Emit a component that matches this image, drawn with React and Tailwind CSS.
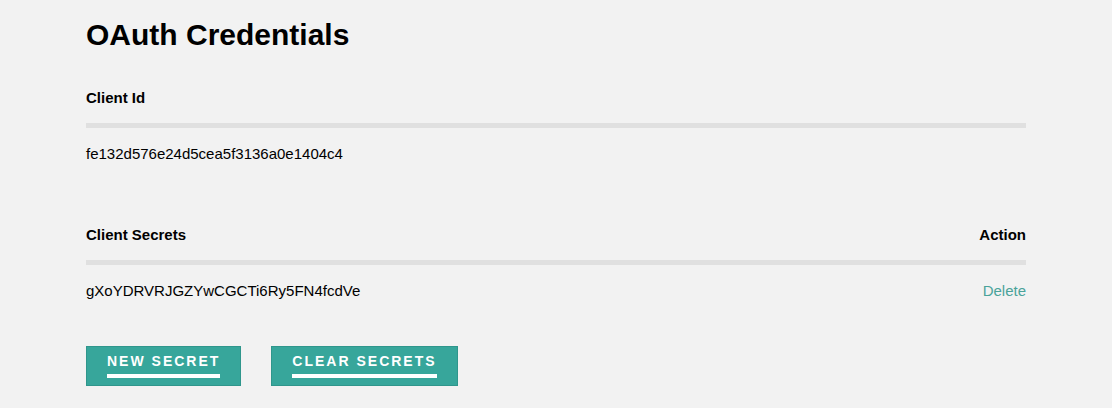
export default function App() {
  return (
    <div className="min-h-[408px] bg-[#f2f2f2] font-['Liberation_Sans',Arial,sans-serif] text-black">
      <div className="mx-[86px] pt-[17px]">
        <h1 className="text-[30px] leading-[36px] font-bold">OAuth Credentials</h1>

        <section className="mt-[35px]">
          <h2 className="text-[15px] leading-[20px] font-bold">Client Id</h2>
          <div className="mt-[15px] h-[5px] bg-[#e0e0e0]" />
          <p className="mt-[16px] text-[15px] leading-[20px]">fe132d576e24d5cea5f3136a0e1404c4</p>
        </section>

        <section className="mt-[61px]">
          <div className="flex items-center justify-between text-[15px] leading-[20px] font-bold">
            <span>Client Secrets</span>
            <span>Action</span>
          </div>
          <div className="mt-[15px] h-[5px] bg-[#e0e0e0]" />
          <div className="mt-[16px] flex items-center justify-between text-[15px] leading-[20px]">
            <span>gXoYDRVRJGZYwCGCTi6Ry5FN4fcdVe</span>
            <a className="text-[#4aa39a] cursor-pointer">Delete</a>
          </div>
        </section>

        <div className="mt-[45px] flex gap-[30px]">
          <button className="inline-flex border border-[#2f968c] bg-[#37a69b] px-5 py-[7px] text-white">
            <span className="border-b-4 border-white pb-[6px] text-[14px] leading-none font-bold tracking-[2px] uppercase">New Secret</span>
          </button>
          <button className="inline-flex border border-[#2f968c] bg-[#37a69b] px-5 py-[7px] text-white">
            <span className="border-b-4 border-white pb-[6px] text-[14px] leading-none font-bold tracking-[2px] uppercase">Clear Secrets</span>
          </button>
        </div>
      </div>
    </div>
  );
}
